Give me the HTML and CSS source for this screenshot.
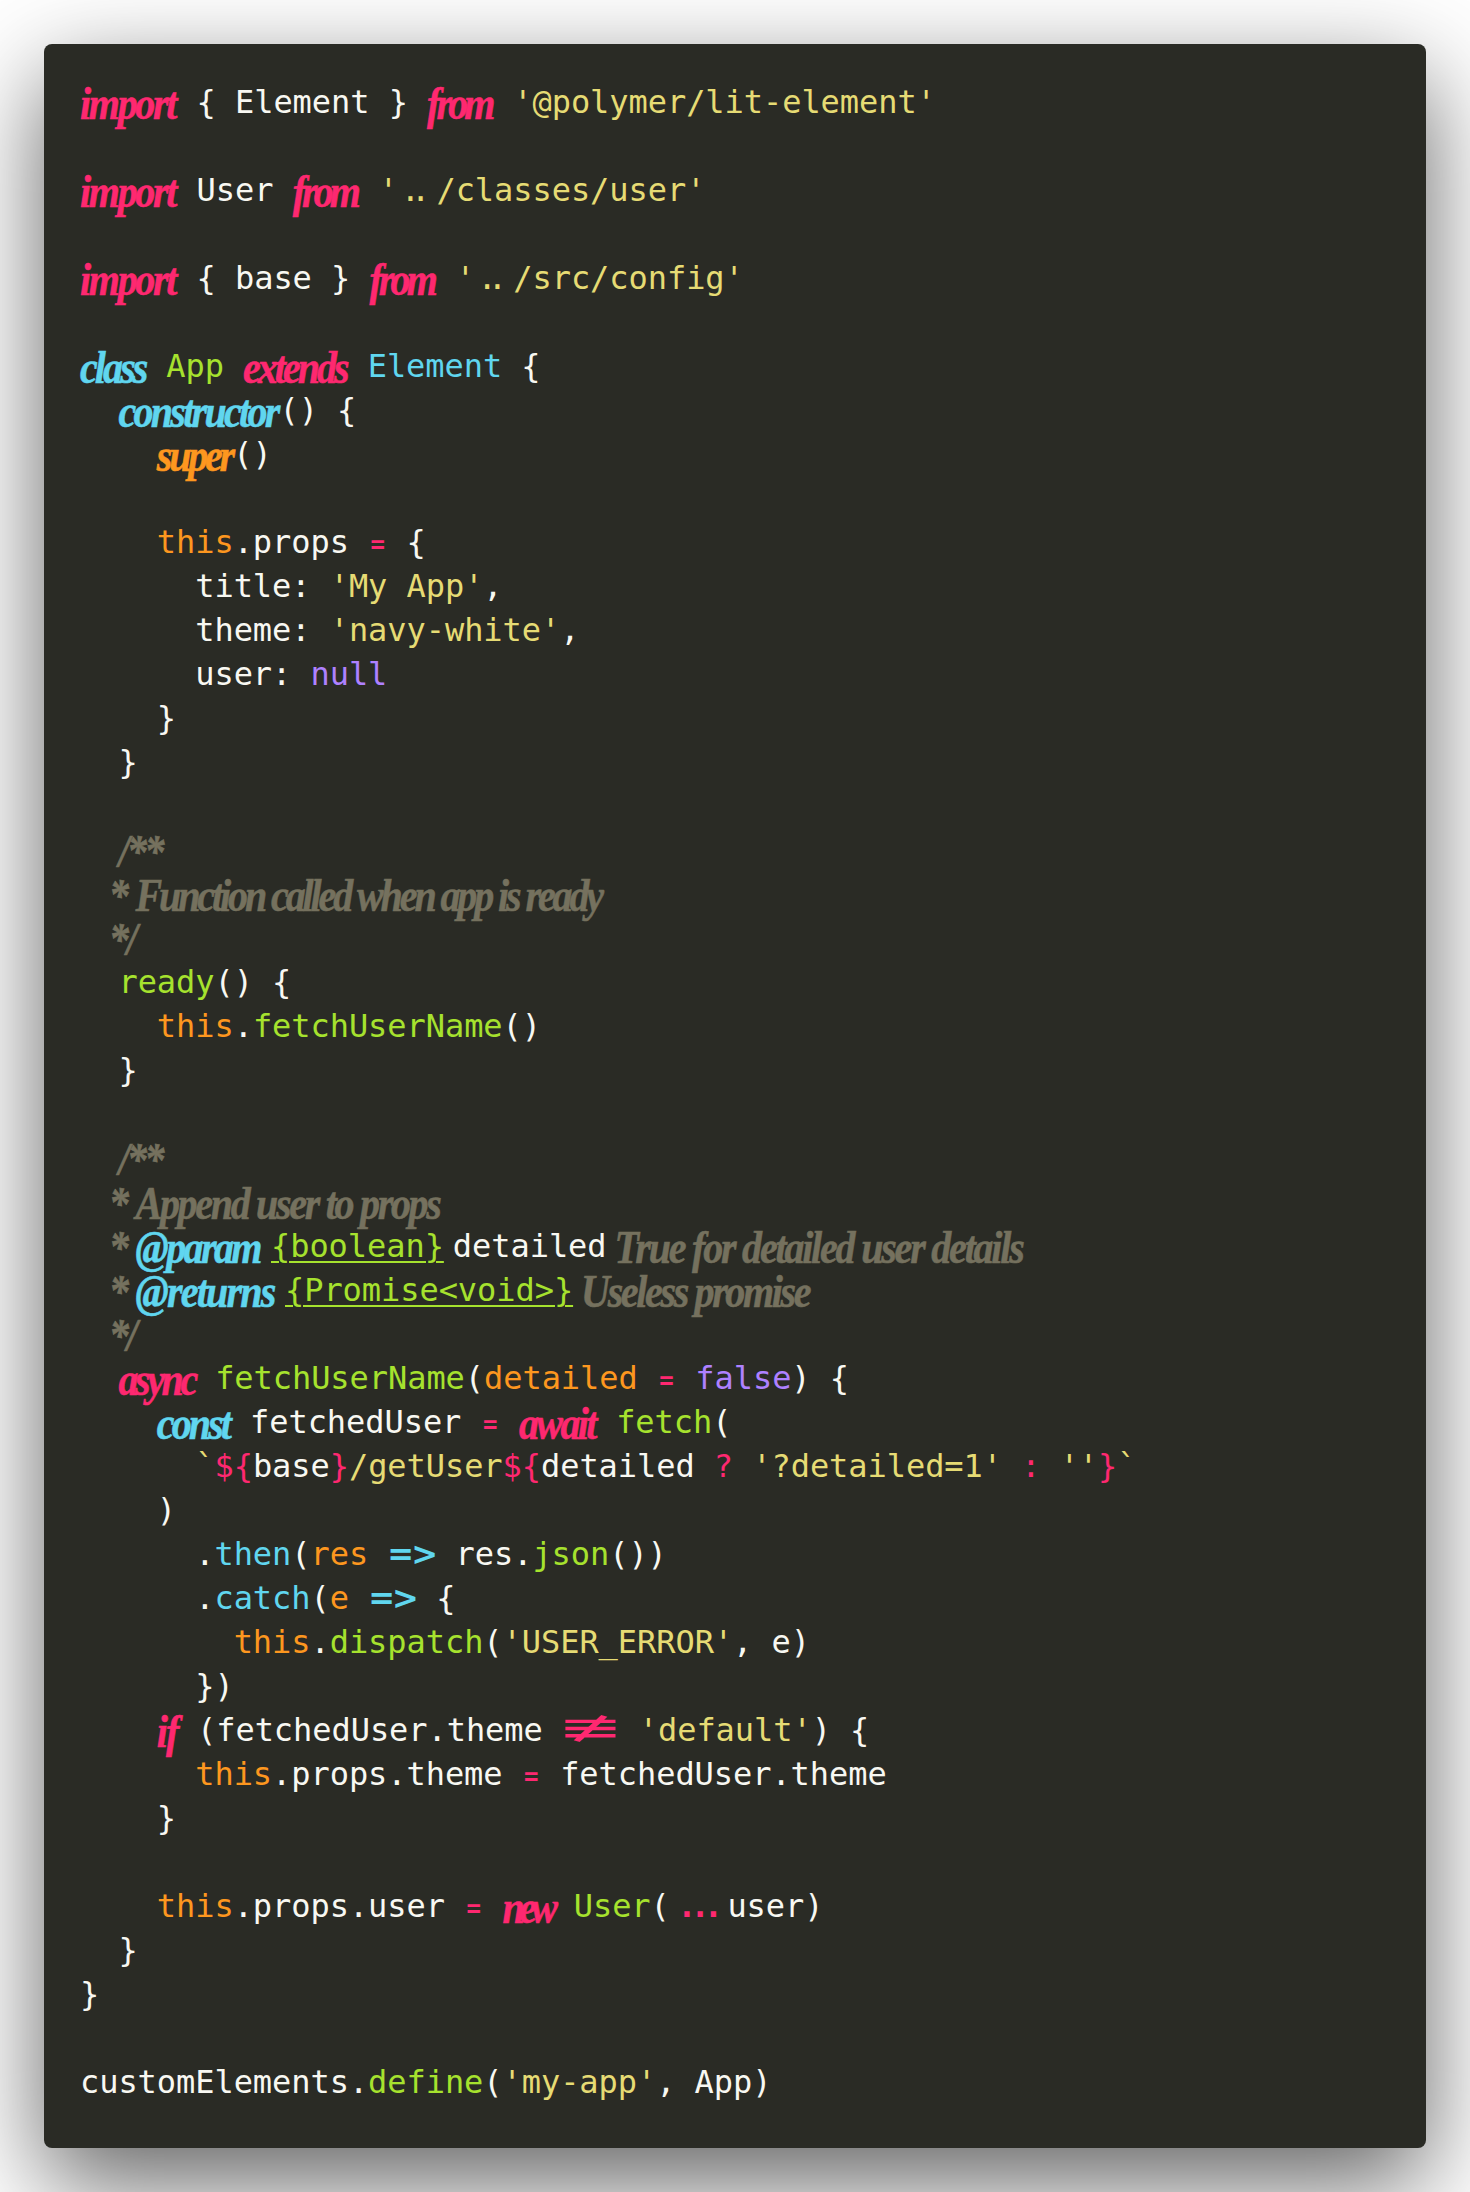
FILE: index.html
```
<!DOCTYPE html>
<html lang="en">
<head>
<meta charset="utf-8">
<title>Code</title>
<link rel="stylesheet" href="styles.css">
</head>
<body>
<main class="card">
<div class="line"><span class="s pink k-import">import</span> { Element } <span class="s pink k-from">from</span> <span class="y">'@polymer/lit-element'</span></div>
<div class="line"></div>
<div class="line"><span class="s pink k-import">import</span> User <span class="s pink k-from">from</span> <span class="y">'<span class="dd">..</span>/classes/user'</span></div>
<div class="line"></div>
<div class="line"><span class="s pink k-import">import</span> { base } <span class="s pink k-from">from</span> <span class="y">'<span class="dd">..</span>/src/config'</span></div>
<div class="line"></div>
<div class="line"><span class="s cyan k-class">class</span> <span class="g">App</span> <span class="s pink k-extends">extends</span> <span class="cyan">Element</span> {</div>
<div class="line">  <span class="s cyan k-constructor">constructor</span>() {</div>
<div class="line">    <span class="s orange k-super">super</span>()</div>
<div class="line"></div>
<div class="line">    <span class="orange">this</span>.props <span class="eq">=</span> {</div>
<div class="line">      title: <span class="y">'My App'</span>,</div>
<div class="line">      theme: <span class="y">'navy-white'</span>,</div>
<div class="line">      user: <span class="purple">null</span></div>
<div class="line">    }</div>
<div class="line">  }</div>
<div class="line"></div>
<div class="line">  <span class="s c">/**</span></div>
<div class="line cl"><span class="s c star">*</span><span class="s c t-function">Function called when app is ready</span></div>
<div class="line cl"><span class="s c">*/</span></div>
<div class="line">  <span class="g">ready</span>() {</div>
<div class="line">    <span class="orange">this</span>.<span class="g">fetchUserName</span>()</div>
<div class="line">  }</div>
<div class="line"></div>
<div class="line">  <span class="s c">/**</span></div>
<div class="line cl"><span class="s c star">*</span><span class="s c t-append">Append user to props</span></div>
<div class="line cl"><span class="s c star">*</span><span class="s cyan t-param">@param</span><span class="g u">{boolean}</span><span class="w-detailed">detailed</span><span class="s c t-true">True for detailed user details</span></div>
<div class="line cl"><span class="s c star">*</span><span class="s cyan t-returns">@returns</span><span class="g u">{Promise&lt;void&gt;}</span><span class="s c t-useless">Useless promise</span></div>
<div class="line cl"><span class="s c">*/</span></div>
<div class="line">  <span class="s pink k-async">async</span> <span class="g">fetchUserName</span>(<span class="orange">detailed</span> <span class="eq">=</span> <span class="purple">false</span>) {</div>
<div class="line">    <span class="s cyan k-const">const</span> fetchedUser <span class="eq">=</span> <span class="s pink k-await">await</span> <span class="g">fetch</span>(</div>
<div class="line">      <span class="y">`</span><span class="pink">${</span>base<span class="pink">}</span><span class="y">/getUser</span><span class="pink">${</span>detailed <span class="pink">?</span> <span class="y">'?detailed=1'</span> <span class="pink">:</span> <span class="y">''</span><span class="pink">}</span><span class="y">`</span></div>
<div class="line">    )</div>
<div class="line">      .<span class="cyan">then</span>(<span class="orange">res</span> <span class="arrow">=&gt;</span> res.<span class="g">json</span>())</div>
<div class="line">      .<span class="cyan">catch</span>(<span class="orange">e</span> <span class="arrow">=&gt;</span> {</div>
<div class="line">        <span class="orange">this</span>.<span class="g">dispatch</span>(<span class="y">'USER_ERROR'</span>, e)</div>
<div class="line">      })</div>
<div class="line">    <span class="s pink k-if">if</span> (fetchedUser.theme <span class="neq"><span class="neq-glyph">≢</span></span> <span class="y">'default'</span>) {</div>
<div class="line">      <span class="orange">this</span>.props.theme <span class="eq">=</span> fetchedUser.theme</div>
<div class="line">    }</div>
<div class="line"></div>
<div class="line">    <span class="orange">this</span>.props.user <span class="eq">=</span> <span class="s pink k-new">new</span> <span class="g">User</span>(<span class="pink ddd">...</span>user)</div>
<div class="line">  }</div>
<div class="line">}</div>
<div class="line"></div>
<div class="line">customElements.<span class="g">define</span>(<span class="y">'my-app'</span>, App)</div>
</main>
</body>
</html>
```
FILE: styles.css
```
html, body {
  margin: 0;
  background: #fff;
}
body {
  padding: 44px;
}
.card {
  box-sizing: border-box;
  width: 1382px;
  height: 2104px;
  padding: 40px 36px;
  background: #2a2b25;
  border-radius: 8px;
  box-shadow: rgba(0, 0, 0, 0.62) 0 35px 100px;
  color: #f8f8f2;
  font-family: "DejaVu Sans Mono", "Liberation Mono", monospace;
  font-size: 32px;
  letter-spacing: -0.06px;
}
.line {
  height: 44px;
  line-height: 36px;
  white-space: pre;
}
.pink { color: #fe2870; }
.cyan { color: #60d6ef; }
.g { color: #a6e22e; }
.y { color: #e6db74; }
.orange { color: #fd971f; }
.purple { color: #ae81ff; }
.c { color: #75715e; }
.u { text-decoration: underline; text-underline-offset: 4px; text-decoration-thickness: 2px; }

.s {
  display: inline-block;
  font-family: "Liberation Serif", serif;
  font-style: italic;
  font-weight: 700;
  font-size: 40px;
  line-height: 0;
  letter-spacing: -2.5px;
  vertical-align: -4px;
  -webkit-text-stroke: 0.5px currentColor;
  transform: scaleY(1.15);
}
.k-import { width: 97.4px; letter-spacing: -2.3px; }
.k-from { width: 67px; letter-spacing: -3.9px; }
.k-class { width: 67px; letter-spacing: -2.9px; }
.k-extends { width: 105.4px; letter-spacing: -3px; }
.k-constructor { width: 161px; letter-spacing: -2.7px; }
.k-super { width: 76.5px; letter-spacing: -3.2px; }
.k-async { width: 77.5px; letter-spacing: -3.4px; }
.k-const { width: 74px; letter-spacing: -2.9px; }
.k-await { width: 78px; letter-spacing: -2.6px; }
.k-if { width: 21px; letter-spacing: -2px; }
.k-new { width: 52px; letter-spacing: -5.6px; }

.cl { padding-left: 29px; }
.star { width: 26.5px; }
.t-function { letter-spacing: -3.1px; }
.t-append { letter-spacing: -2.3px; }
.t-param { width: 135.5px; letter-spacing: -2.6px; }
.t-returns { width: 149.5px; letter-spacing: -1.8px; }
.w-detailed { margin-left: 9px; }
.t-true { margin-left: 8px; letter-spacing: -2.2px; }
.t-useless { margin-left: 8px; letter-spacing: -2.35px; }

.eq {
  display: inline-block;
  width: 19.2px;
  font-size: 24px;
  text-align: center;
  color: #fe2870;
  font-weight: 700;
  letter-spacing: 0;
}
.dd {
  display: inline-block;
  box-sizing: border-box;
  width: 38.4px;
  padding-left: 2.6px;
  letter-spacing: -9px;
}
.ddd {
  display: inline-block;
  box-sizing: border-box;
  width: 57.6px;
  padding-left: 7.4px;
  letter-spacing: -6px;
  font-weight: 700;
}
.arrow {
  display: inline-block;
  width: 49px;
  font-family: "DejaVu Sans", sans-serif;
  font-weight: 700;
  font-size: 32px;
  letter-spacing: -3px;
  color: #60d6ef;
}
.neq {
  display: inline-block;
  width: 57.6px;
  text-align: center;
  color: #fe2870;
}
.neq-glyph {
  display: inline-block;
  font-family: "DejaVu Sans", sans-serif;
  font-size: 40px;
  line-height: 0;
  transform: scaleX(2);
}
```
